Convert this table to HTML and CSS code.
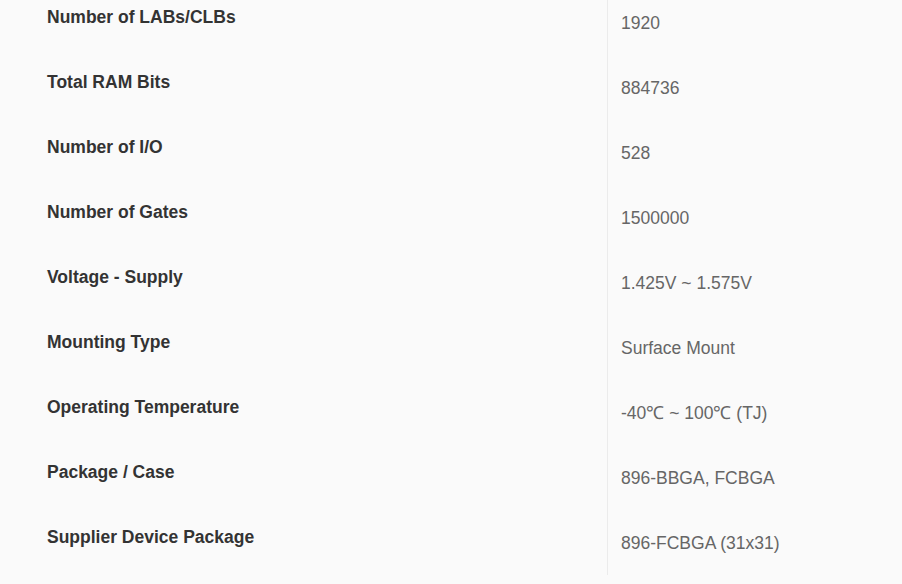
FILE: index.html
```html
<!DOCTYPE html>
<html>
<head>
<meta charset="utf-8">
<link rel="stylesheet" href="styles.css">
</head>
<body>
<div class="specs">
  <div class="row"><div class="label">Number of LABs/CLBs</div><div class="value">1920</div></div>
  <div class="row"><div class="label">Total RAM Bits</div><div class="value">884736</div></div>
  <div class="row"><div class="label">Number of I/O</div><div class="value">528</div></div>
  <div class="row"><div class="label">Number of Gates</div><div class="value">1500000</div></div>
  <div class="row"><div class="label">Voltage - Supply</div><div class="value">1.425V ~ 1.575V</div></div>
  <div class="row"><div class="label">Mounting Type</div><div class="value">Surface Mount</div></div>
  <div class="row"><div class="label">Operating Temperature</div><div class="value">-40<span class="deg">℃</span> ~ 100<span class="deg">℃</span> (TJ)</div></div>
  <div class="row"><div class="label">Package / Case</div><div class="value">896-BBGA, FCBGA</div></div>
  <div class="row last"><div class="label">Supplier Device Package</div><div class="value">896-FCBGA (31x31)</div></div>
</div>
</body>
</html>
```
FILE: styles.css
```css
html, body {
  margin: 0;
  padding: 0;
  background: #fafafa;
}
body {
  font-family: "Liberation Sans", Arial, sans-serif;
  overflow: hidden;
}
.specs {
  display: flex;
  flex-direction: column;
  width: 902px;
}
.row {
  display: grid;
  grid-template-columns: 607px 1fr;
  height: 65px;
}
.row.last {
  height: 55px;
}
.label {
  padding: 7px 0 0 47px;
  font-size: 17.5px;
  line-height: 20px;
  font-weight: bold;
  color: #333;
}
.value {
  border-left: 1px solid #ebebeb;
  padding: 13px 0 0 13px;
  font-size: 17.5px;
  line-height: 20px;
  color: #666;
}
.deg {
  font-family: "Liberation Serif", serif;
  font-size: 18px;
}
```
